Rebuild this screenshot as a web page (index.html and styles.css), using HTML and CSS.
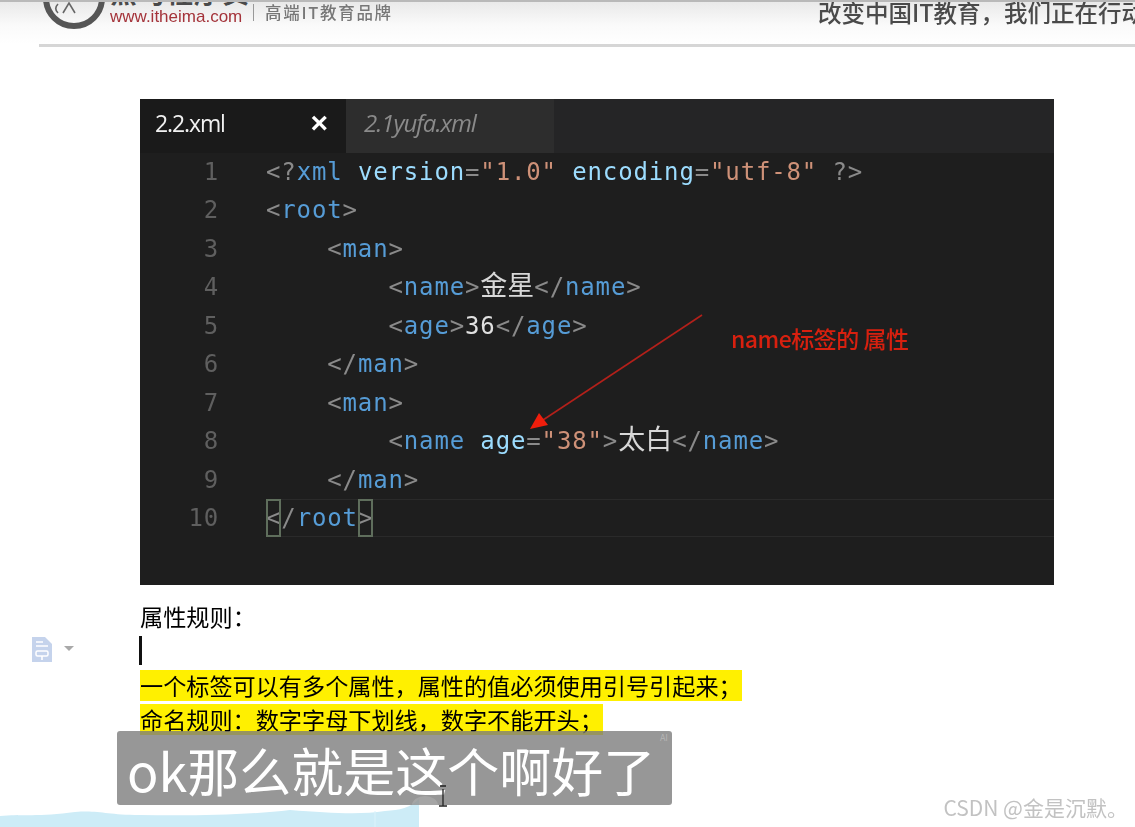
FILE: index.html
```html
<!DOCTYPE html>
<html lang="zh-CN">
<head>
<meta charset="utf-8">
<title>XML 属性规则</title>
<link rel="stylesheet" href="styles.css">
</head>
<body>
<header class="banner">
  <svg class="logo" width="66" height="32" viewBox="0 0 66 32" aria-hidden="true">
    <circle cx="35" cy="-2" r="28" fill="none" stroke="#565656" stroke-width="6"/>
    <path d="M19 4C16 7 16 10 19 13M24 13L30 3L36 13" fill="none" stroke="#666" stroke-width="1.6"/>
  </svg>
  <div class="brand">
    <div class="brand-cn">黑马程序员</div>
    <div class="brand-url">www.itheima.com</div>
  </div>
  <div class="tagline">高端IT教育品牌</div>
  <div class="slogan">改变中国IT教育，我们正在行动</div>
</header>
<div class="rule"></div>

<main class="doc">
  <section class="editor">
    <div class="tabs">
      <div class="tab active"><span>2.2.xml</span><span class="close">×</span></div>
      <div class="tab idle">2.1yufa.xml</div>
      <div class="tab-rest"></div>
    </div>
    <div class="code">
      <div class="row"><span class="num">1</span><span class="src"><b>&lt;?</b><i>xml</i> <u>version</u><b>=</b><s>"1.0"</s> <u>encoding</u><b>=</b><s>"utf-8"</s> <b>?&gt;</b></span></div>
      <div class="row"><span class="num">2</span><span class="src"><b>&lt;</b><i>root</i><b>&gt;</b></span></div>
      <div class="row"><span class="num">3</span><span class="src">    <b>&lt;</b><i>man</i><b>&gt;</b></span></div>
      <div class="row"><span class="num">4</span><span class="src">        <b>&lt;</b><i>name</i><b>&gt;</b><em>金星</em><b>&lt;/</b><i>name</i><b>&gt;</b></span></div>
      <div class="row"><span class="num">5</span><span class="src">        <b>&lt;</b><i>age</i><b>&gt;</b>36<b>&lt;/</b><i>age</i><b>&gt;</b></span></div>
      <div class="row"><span class="num">6</span><span class="src">    <b>&lt;/</b><i>man</i><b>&gt;</b></span></div>
      <div class="row"><span class="num">7</span><span class="src">    <b>&lt;</b><i>man</i><b>&gt;</b></span></div>
      <div class="row"><span class="num">8</span><span class="src">        <b>&lt;</b><i>name</i> <u>age</u><b>=</b><s>"38"</s><b>&gt;</b><em>太白</em><b>&lt;/</b><i>name</i><b>&gt;</b></span></div>
      <div class="row"><span class="num">9</span><span class="src">    <b>&lt;/</b><i>man</i><b>&gt;</b></span></div>
      <div class="row current"><span class="num">10</span><span class="src"><b class="match">&lt;</b><b>/</b><i>root</i><b class="match">&gt;</b></span></div>
    </div>
    <svg class="arrow" width="180" height="120" viewBox="0 0 180 120" aria-hidden="true">
      <path d="M173 1L14 106" stroke="#b3201a" stroke-width="1.6" fill="none"/>
      <path d="M1 115L10 99L19 111Z" fill="#f01e0c"/>
    </svg>
    <div class="note">name标签的 属性</div>
  </section>

  <h2 class="heading">属性规则：</h2>
  <div class="caret"></div>
  <p class="mark">一个标签可以有多个属性，属性的值必须使用引号引起来；</p>
  <p class="mark">命名规则：数字字母下划线，数字不能开头；</p>
</main>

<svg class="side-icon" width="46" height="28" viewBox="0 0 46 28" aria-hidden="true">
  <path d="M1 1H14L21 8V26H1Z" fill="#c5d3ec"/>
  <path d="M5 6H12M5 10H17M11 20V24" stroke="#fff" stroke-width="1.6" fill="none"/>
  <rect x="5" y="15" width="12" height="5" rx="1.5" stroke="#fff" stroke-width="1.5" fill="none"/>
  <path d="M33 10H43L38 15Z" fill="#a9a9a9"/>
</svg>

<svg class="wave" width="420" height="20" viewBox="0 0 420 20" aria-hidden="true">
  <path d="M0 9C20 7 40 10 75 5C100 3 105 8 140 8C190 9 250 8 290 3C330 6 360 8 385 4C400 3 410 1 419 -8V20H0Z" fill="#cdecf7"/>
  <path d="M375 4V20" stroke="#dcf3fb" stroke-width="1"/>
</svg>

<div class="subtitle">ok那么就是这个啊好了<span class="ai">AI</span><span class="glow"></span></div>
<svg class="ibeam" width="12" height="22" viewBox="0 0 12 22" aria-hidden="true">
  <path d="M3 1H9M6 4V21M2 21H10" stroke="#222" stroke-width="1.3" fill="none"/>
</svg>
<div class="watermark">CSDN @金是沉默。</div>
</body>
</html>
```
FILE: styles.css
```css
html, body {
  margin: 0;
  padding: 0;
  background: #fff;
}
body {
  position: relative;
  width: 1135px;
  height: 827px;
  overflow: hidden;
  font-family: "Noto Sans CJK SC", "Liberation Sans", sans-serif;
}

/* top banner */
.banner {
  display: flex;
  height: 44px;
  box-sizing: border-box;
  border-top: 2px solid #b9b9b9;
  padding-left: 39px;
  overflow: hidden;
  background: linear-gradient(#e9e9e9, #fafafa 55%, #fff);
}
.logo {
  flex: none;
  margin-right: 5px;
  margin-top: -2px;
}
.brand {
  width: 142px;
  flex: none;
  margin-top: -26px;
}
.brand-cn {
  height: 31px;
  line-height: 31px;
  font-size: 27px;
  font-weight: 700;
  letter-spacing: 1px;
  color: #4a4a4a;
}
.brand-url {
  font-family: "Liberation Sans", sans-serif;
  font-size: 17px;
  line-height: 20px;
  color: #a4333a;
  white-space: nowrap;
  filter: blur(.4px);
}
.tagline {
  flex: none;
  height: 17px;
  margin-top: 2px;
  margin-left: 1px;
  margin-right: 353px;
  padding-left: 11px;
  border-left: 1px solid #999;
  width: 200px;
  font-size: 16.5px;
  line-height: 17px;
  letter-spacing: 1.7px;
  font-weight: 500;
  color: #777;
  filter: blur(.4px);
}
.slogan {
  flex: none;
  font-size: 23.5px;
  line-height: 20px;
  font-weight: 500;
  white-space: nowrap;
  color: #4a4a4a;
  filter: blur(.4px);
}
.rule {
  height: 3px;
  margin-left: 39px;
  background: #d6d6d6;
}

/* document */
.doc {
  width: 914px;
  margin: 52px 0 0 140px;
}
.editor {
  position: relative;
  height: 486px;
  background: #1e1e1e;
}
.tabs {
  display: flex;
  height: 54px;
  background: #252526;
}
.tab {
  box-sizing: border-box;
  height: 54px;
  font-family: "Open Sans", sans-serif;
  font-size: 23px;
  line-height: 48px;
  letter-spacing: -1.1px;
  filter: blur(.3px);
}
.active {
  display: flex;
  justify-content: space-between;
  width: 206px;
  padding: 0 18px 0 15px;
  background: #1a1a1a;
  color: #f1f1f1;
}
.close {
  font-family: "Liberation Sans", sans-serif;
  font-size: 30px;
  font-weight: 700;
  letter-spacing: 0;
  color: #fff;
}
.idle {
  width: 208px;
  padding-left: 18px;
  background: #2d2d2d;
  color: #8a8a8a;
  font-size: 24px;
  letter-spacing: -1px;
  font-style: italic;
}
.tab-rest {
  flex: 1;
}
.code {
  filter: blur(.35px);
}
.row {
  display: flex;
  box-sizing: border-box;
  height: 38.45px;
  line-height: 38px;
  font-family: "DejaVu Sans Mono", monospace;
  font-size: 24px;
  letter-spacing: .86px;
  color: #e0e0e0;
}
.num {
  width: 79px;
  flex: none;
  text-align: right;
  color: #5f5f5f;
}
.src {
  margin-left: 47px;
  white-space: pre;
}
.src b { font-weight: 400; color: #8a8a8a; }
.src i { font-style: normal; color: #569cd6; }
.src u { text-decoration: none; color: #9cdcfe; }
.src s { text-decoration: none; color: #ce9178; }
.src em {
  font-style: normal;
  font-family: "Noto Sans CJK SC", sans-serif;
  font-size: 27px;
  line-height: 0;
  letter-spacing: 0;
  color: #d8d8d8;
}
.current {
  box-shadow: inset 0 1px 0 #2a2a2a, inset 0 -1px 0 #2a2a2a;
  margin-left: 126px;
}
.current .num {
  margin-left: -126px;
}
.match {
  outline: 2px solid #5f6e5c;
  outline-offset: -2px;
  display: inline-block;
  height: 38px;
  vertical-align: top;
}
.arrow {
  position: absolute;
  left: 389px;
  top: 215px;
}
.note {
  position: absolute;
  left: 591px;
  top: 223px;
  font-size: 23px;
  line-height: 32px;
  letter-spacing: -.5px;
  color: #d8200f;
  font-weight: 500;
  filter: blur(.3px);
}

/* text below the editor */
.heading {
  margin: 14px 0 0;
  font-size: 23.2px;
  line-height: 34px;
  font-weight: 400;
  color: #000;
  filter: blur(.3px);
}
.caret {
  width: 3px;
  height: 29px;
  margin-top: 3px;
  margin-left: -1px;
  background: #111;
}
.mark {
  width: fit-content;
  margin: 5px 0 0;
  background: #fff000;
  font-size: 23.15px;
  line-height: 31px;
  height: 31px;
  font-weight: 400;
  white-space: nowrap;
  color: #000;
  filter: blur(.3px);
}
.mark + .mark {
  margin-top: 3px;
}

/* overlays */
.side-icon {
  position: absolute;
  left: 31px;
  top: 636px;
}
.wave {
  position: absolute;
  left: 0;
  top: 807px;
  overflow: visible;
}
.subtitle {
  position: absolute;
  left: 117px;
  top: 731px;
  box-sizing: border-box;
  width: 555px;
  height: 74px;
  padding-left: 10px;
  border-radius: 3px;
  overflow: hidden;
  background: rgba(122, 122, 122, .78);
  font-size: 52px;
  line-height: 78px;
  color: #fff;
  white-space: nowrap;
}
.ai {
  position: absolute;
  right: 4px;
  top: 1px;
  font-size: 9px;
  line-height: 12px;
  color: #b5b5b5;
}
.glow {
  position: absolute;
  left: 295px;
  top: 65px;
  width: 26px;
  height: 18px;
  border-radius: 50%;
  background: rgba(255, 255, 255, .14);
}
.ibeam {
  position: absolute;
  left: 437px;
  top: 785px;
}
.watermark {
  position: absolute;
  right: 7px;
  top: 794px;
  font-size: 21px;
  line-height: 26px;
  white-space: nowrap;
  color: #c2c2c2;
  filter: blur(.3px);
}
```
